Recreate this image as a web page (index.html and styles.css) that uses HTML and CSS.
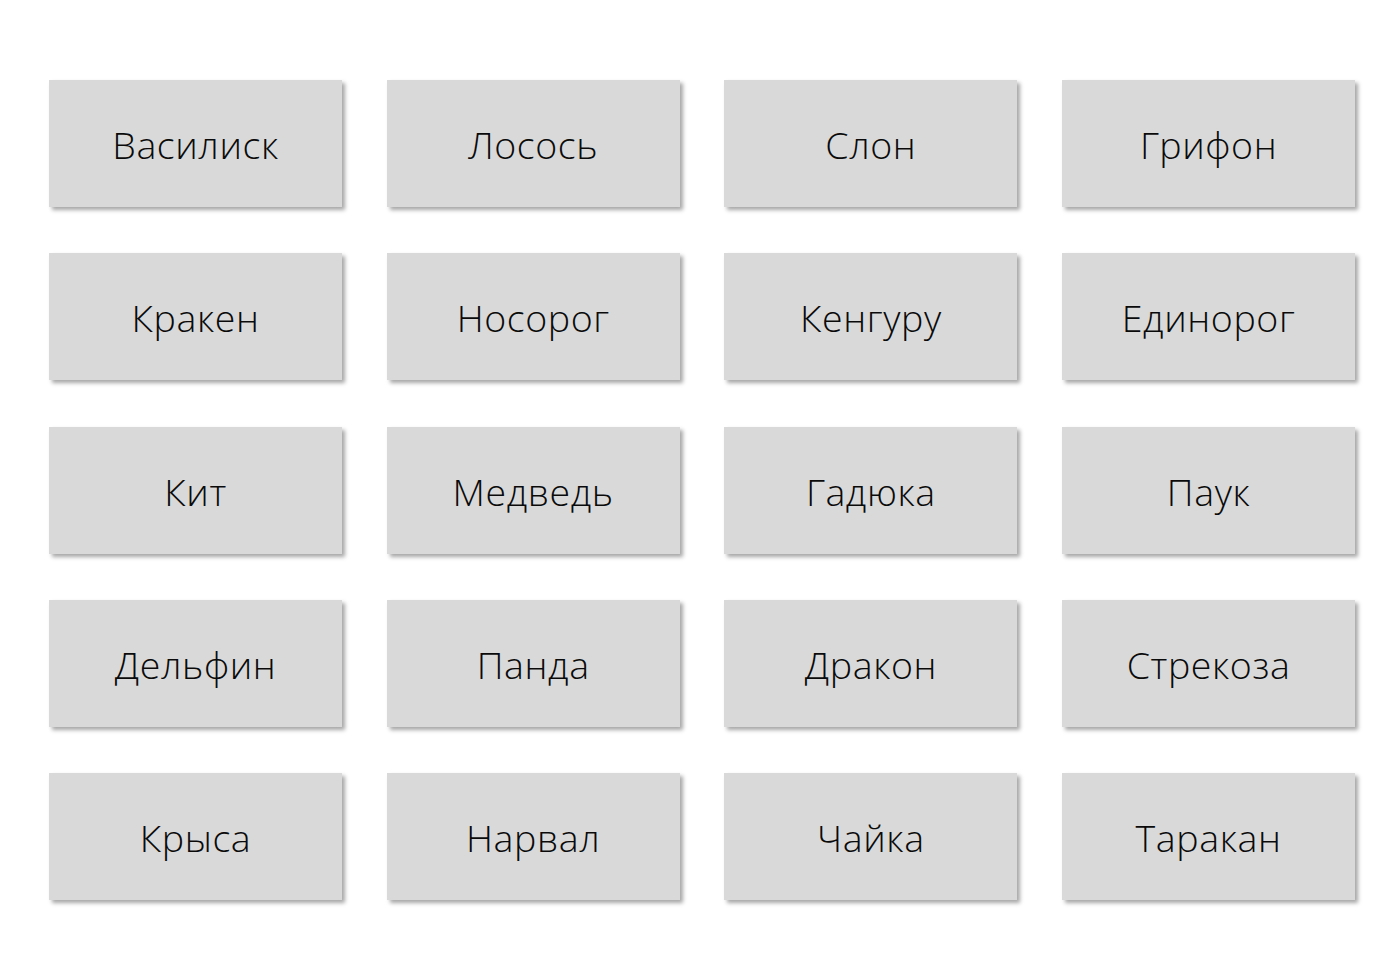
FILE: index.html
```html
<!DOCTYPE html>
<html lang="ru">
<head>
<meta charset="utf-8">
<title>Карточки</title>
<link rel="stylesheet" href="styles.css">
</head>
<body>
<main class="grid">
  <div class="card">Василиск</div>
  <div class="card">Лосось</div>
  <div class="card">Слон</div>
  <div class="card">Грифон</div>
  <div class="card">Кракен</div>
  <div class="card">Носорог</div>
  <div class="card">Кенгуру</div>
  <div class="card">Единорог</div>
  <div class="card">Кит</div>
  <div class="card">Медведь</div>
  <div class="card">Гадюка</div>
  <div class="card">Паук</div>
  <div class="card">Дельфин</div>
  <div class="card">Панда</div>
  <div class="card">Дракон</div>
  <div class="card">Стрекоза</div>
  <div class="card">Крыса</div>
  <div class="card">Нарвал</div>
  <div class="card">Чайка</div>
  <div class="card">Таракан</div>
</main>
</body>
</html>
```
FILE: styles.css
```css
html, body {
  margin: 0;
  padding: 0;
  background: #ffffff;
}
body {
  font-family: "Open Sans", "Liberation Sans", sans-serif;
  min-height: 980px;
}
.grid {
  display: grid;
  grid-template-columns: repeat(4, 293px);
  grid-auto-rows: 127px;
  column-gap: 44.7px;
  row-gap: 46.3px;
  padding: 80px 0 60px 49px;
}
.card {
  background: #d9d9d9;
  box-shadow: 3px 3px 4px rgba(0, 0, 0, 0.35);
  display: flex;
  align-items: center;
  justify-content: center;
  font-size: 37.5px;
  font-weight: 300;
  color: #0a0a0a;
  letter-spacing: 0.6px;
  padding-top: 2px;
}
```
